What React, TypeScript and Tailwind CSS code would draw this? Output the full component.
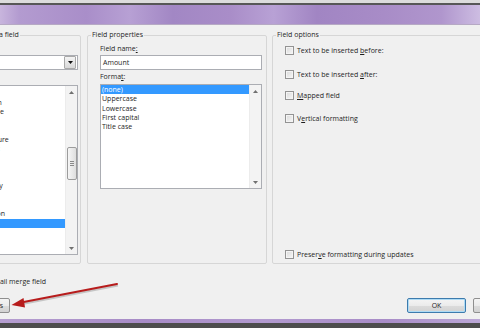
import React from 'react'

const fieldNames = [
  'Fill-in',
  'GoToButton',
  'GreetingLine',
  'Hyperlink',
  'If',
  'IncludePicture',
  'IncludeText',
  'Index',
  'Info',
  'Keywords',
  'LastSavedBy',
  'Link',
  'ListNum',
  'MacroButton',
  'MergeField',
  'MergeRec',
  'MergeSeq',
  'Next',
]

const formats = ['(none)', 'Uppercase', 'Lowercase', 'First capital', 'Title case']

function Tri({ dir }: { dir: 'up' | 'down' }) {
  return (
    <svg width="5" height="3" viewBox="0 0 5 3">
      <path d={dir === 'up' ? 'M0 3 L2.5 0 L5 3Z' : 'M0 0 L5 0 L2.5 3Z'} fill="#707070" />
    </svg>
  )
}

function ScrollBar({ thumb }: { thumb?: { top: number; height: number } }) {
  return (
    <div className="w-[12px] shrink-0 flex flex-col bg-[#f3f3f3] border-l border-[#ececec]">
      <div className="h-[12px] flex items-center justify-center">
        <Tri dir="up" />
      </div>
      <div className="flex-1 flex flex-col items-center">
        {thumb && (
          <div
            className="w-[10px] rounded-[2px] border border-[#9c9c9c] bg-[linear-gradient(90deg,#f6f6f6,#dedede)] flex flex-col items-center justify-center gap-[1px]"
            style={{ marginTop: thumb.top, height: thumb.height }}
          >
            <div className="w-[4px] h-px bg-[#8a8a8a]" />
            <div className="w-[4px] h-px bg-[#8a8a8a]" />
            <div className="w-[4px] h-px bg-[#8a8a8a]" />
          </div>
        )}
      </div>
      <div className="h-[12px] flex items-center justify-center">
        <Tri dir="down" />
      </div>
    </div>
  )
}

function Check({ children }: { children: React.ReactNode }) {
  return (
    <div className="flex items-center gap-[3px]">
      <span className="w-[9px] h-[9px] shrink-0 border border-[#939393] bg-[linear-gradient(135deg,#d9d9d9,#f7f7f7)] shadow-[inset_0_0_0_1px_#f4f4f4]" />
      <span>{children}</span>
    </div>
  )
}

function Button({ children, focus, className }: { children: React.ReactNode; focus?: boolean; className: string }) {
  return (
    <div
      className={`h-[15px] shrink-0 rounded-[2px] border flex items-center justify-center bg-[linear-gradient(180deg,#f4f4f4_0%,#ebebeb_50%,#dcdcdc_51%,#d2d2d2_100%)] ${
        focus ? 'border-[#3d7bad] shadow-[inset_0_0_0_1px_#aedbf5]' : 'border-[#8f8f8f]'
      } ${className}`}
    >
      {children}
    </div>
  )
}

export default function App() {
  return (
    <div className="relative w-[480px] h-[328px] overflow-hidden flex flex-col bg-[#f0f0f0] text-[7px] leading-[10px] text-[#1e1e1e] font-['Open_Sans',sans-serif]">
      {/* window frame top */}
      <div className="h-[3px] shrink-0 bg-[#dcdcdc]" />
      <div className="h-[2px] shrink-0 bg-[#575757]" />
      <div className="h-[19px] shrink-0 bg-[linear-gradient(90deg,#c8b5dd_0%,#b39bd0_4%,#a98ec9_18%,#b7a0d4_27%,#a287c4_36%,#a98dc8_48%,#b8a1d5_57%,#a185c3_66%,#a88cc7_80%,#b096cd_92%,#cdbde2_100%)]" />
      <div className="h-px shrink-0 bg-[#b6a9c4]" />

      {/* dialog body */}
      <div className="h-[294px] shrink-0 flex flex-col">
        <div className="flex pt-[5px] ml-[-54px]">
          {/* Please choose a field */}
          <fieldset className="w-[135px] h-[234px] shrink-0 border border-[#d6d6d6] rounded-[2px] pl-[3px] pr-[2px]">
            <legend className="px-[1px] leading-[10px]">Please choose a field</legend>
            <div className="pl-[9px] flex flex-col">
              <div className="mt-[4px]">Categories:</div>
              <div className="mt-px h-[15px] border border-[#abadb3] bg-white flex items-center">
                <span className="pl-[2px] flex-1">(All)</span>
                <div className="w-[12px] h-[13px] mr-px border border-[#a9a9a9] rounded-[1px] bg-[linear-gradient(180deg,#f4f4f4,#d8d8d8)] flex items-center justify-center">
                  <svg width="5" height="3" viewBox="0 0 5 3">
                    <path d="M0 0 L5 0 L2.5 3Z" fill="#111" />
                  </svg>
                </div>
              </div>
              <div className="mt-[3px]">Field names:</div>
              <div className="mt-[2px] h-[170px] border border-[#abadb3] bg-white flex overflow-hidden">
                <div className="flex-1 pt-[2.5px] leading-[9.3px]">
                  {fieldNames.map((n) => (
                    <div key={n} className={`pl-[2px] ${n === 'MergeField' ? 'bg-[#3399ff] text-white' : ''}`}>
                      {n}
                    </div>
                  ))}
                </div>
                <ScrollBar thumb={{ top: 49, height: 33 }} />
              </div>
            </div>
          </fieldset>

          {/* Field properties */}
          <fieldset className="ml-[6px] w-[180px] h-[234px] shrink-0 border border-[#d6d6d6] rounded-[2px] pl-[3px] pr-[4px]">
            <legend className="px-[1px] leading-[10px]">Field properties</legend>
            <div className="pl-[9px] flex flex-col">
              <div className="mt-[4px]">
                Field name<u>:</u>
              </div>
              <div className="mt-px h-[15px] border border-[#abadb3] bg-white flex items-center pl-[2px]">Amount</div>
              <div className="mt-[2px]">
                Forma<u>t</u>:
              </div>
              <div className="mt-[2px] h-[105px] border border-[#abadb3] bg-white flex">
                <div className="flex-1 leading-[9.3px]">
                  {formats.map((f, i) => (
                    <div key={f} className={`pl-px ${i === 0 ? 'bg-[#3399ff] text-white' : ''}`}>
                      {f}
                    </div>
                  ))}
                </div>
                <ScrollBar />
              </div>
            </div>
          </fieldset>

          {/* Field options */}
          <fieldset className="ml-[5px] w-[300px] h-[234px] shrink-0 border border-[#d6d6d6] rounded-[2px] pl-[3px]">
            <legend className="px-[1px] leading-[10px]">Field options</legend>
            <div className="pl-[9px] w-[286px] flex flex-col">
              <div className="mt-[3px] h-[15px] flex items-center justify-between">
                <Check>
                  Text to be inserted <u>b</u>efore:
                </Check>
                <div className="w-[80px] h-[15px] border border-[#abadb3] bg-white" />
              </div>
              <div className="mt-[9px] h-[15px] flex items-center justify-between">
                <Check>
                  Text to be inserted <u>a</u>fter:
                </Check>
                <div className="w-[80px] h-[15px] border border-[#abadb3] bg-white" />
              </div>
              <div className="mt-[6px] h-[15px] flex items-center">
                <Check>
                  <u>M</u>apped field
                </Check>
              </div>
              <div className="mt-[8px] h-[15px] flex items-center">
                <Check>
                  V<u>e</u>rtical formatting
                </Check>
              </div>
              <div className="mt-[121px] h-[15px] flex items-center">
                <Check>
                  Preser<u>v</u>e formatting during updates
                </Check>
              </div>
            </div>
          </fieldset>
        </div>

        {/* description + buttons */}
        <div className="ml-[-41px] flex flex-col">
          <div className="mt-[4px]">Description:</div>
          <div className="pl-[8px] mt-[-1px]">Insert a mail merge field</div>
          <div className="mt-[11px] flex">
            <Button className="w-[51px]">Field Codes</Button>
            <Button focus className="ml-[397px] w-[59px]">
              OK
            </Button>
            <Button className="ml-[7px] w-[59px]">Cancel</Button>
          </div>
        </div>
      </div>

      {/* window frame bottom */}
      <div className="h-[4px] shrink-0 bg-[linear-gradient(90deg,#b59ed0_0%,#a78bc6_30%,#b29acf_55%,#a88cc7_80%,#bba7d6_100%)]" />
      <div className="flex-1 bg-[#4d4d4d]" />

      {/* annotation arrow */}
      <svg className="absolute inset-0 pointer-events-none" width="480" height="328" viewBox="0 0 480 328">
        <line x1="118" y1="285.5" x2="22" y2="304" stroke="#9a9a9a" strokeOpacity="0.5" strokeWidth="2" />
        <line x1="117" y1="284" x2="21" y2="302.5" stroke="#b71c1c" strokeWidth="2" strokeLinecap="round" />
        <polygon points="11.5,305 23.5,298 25,307.5" fill="#b71c1c" />
      </svg>
    </div>
  )
}
